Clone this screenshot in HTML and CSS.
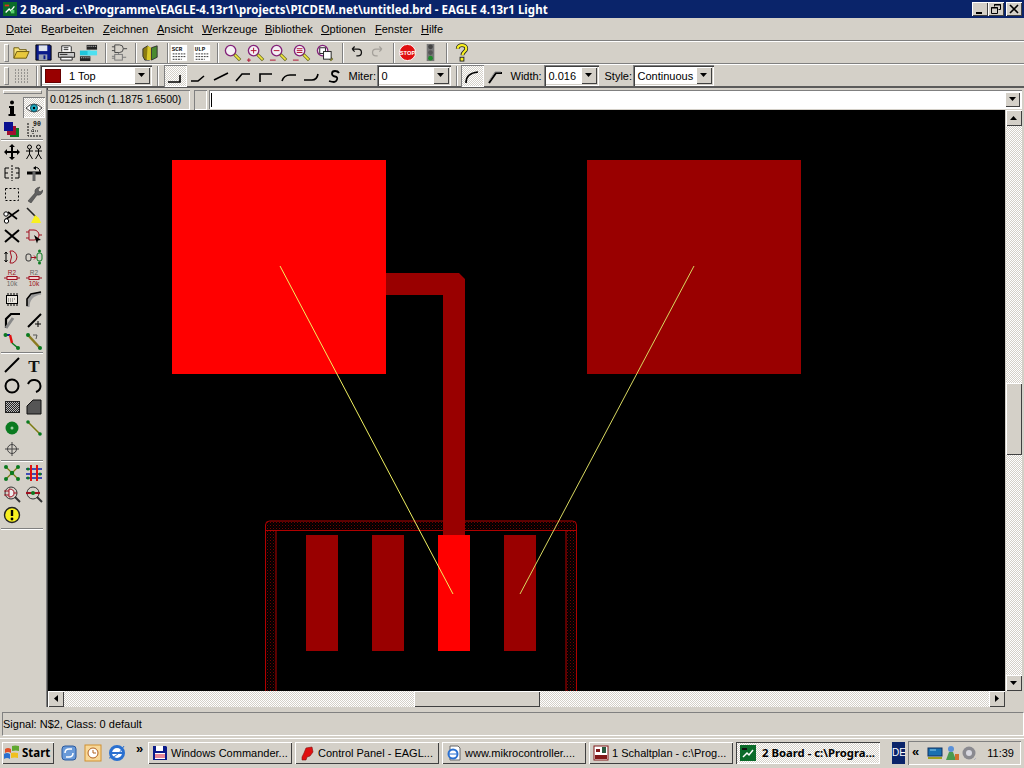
FILE: index.html
```html
<!DOCTYPE html>
<html lang="de">
<head>
<meta charset="utf-8">
<title>2 Board - EAGLE 4.13r1 Light</title>
<link rel="stylesheet" href="styles.css">
</head>
<body>
<svg class="sprite" aria-hidden="true">
  <symbol id="lens" viewBox="0 0 20 20"><circle cx="8" cy="8" r="5.5" fill="#f4f0f4" stroke="#84227a" stroke-width="1.4"/><path d="M12 12l6 6" stroke="#6a6a20" stroke-width="3.4"/><path d="M12.5 12.5l5 5" stroke="#f2e840" stroke-width="1.6"/></symbol>
  <symbol id="arrow" viewBox="0 0 8 5"><path d="M0 0h7L3.500 4z" fill="#000"/></symbol>
</svg>
<div class="window">
  <header class="titlebar">
    <svg class="appicon" viewBox="0 0 16 16"><rect width="16" height="16" fill="#0b6b2a"/><path d="M3 12l4-4 2 2 4-5" stroke="#fff" stroke-width="1.5" fill="none"/><path d="M2 4h5" stroke="#e03020" stroke-width="2"/><rect x="9" y="9" width="4" height="4" fill="#59d070"/></svg>
    <span class="title">2 Board - c:\Programme\EAGLE-4.13r1\projects\PICDEM.net\untitled.brd - EAGLE 4.13r1 Light</span>
    <div class="winbtns">
      <span class="winbtn"><svg viewBox="0 0 12 12" width="12" height="12"><rect x="2" y="9" width="6" height="2" fill="#000"/></svg></span>
      <span class="winbtn"><svg viewBox="0 0 12 12" width="12" height="12"><path d="M4.500 3.500V1.500h6v5h-2M1.500 4.500h6v6h-6z" fill="none" stroke="#000"/><path d="M4 2h7M1 5h7" stroke="#000"/></svg></span>
      <span class="winbtn winbtn-last"><svg viewBox="0 0 12 12" width="12" height="12"><path d="M2 2l8 8M10 2l-8 8" stroke="#000" stroke-width="1.600"/></svg></span>
    </div>
  </header>

  <nav class="menubar">
    <span class="m m1"><u>D</u>atei</span><span class="m m2">B<u>e</u>arbeiten</span><span class="m m3"><u>Z</u>eichnen</span><span class="m m4"><u>A</u>nsicht</span><span class="m m5"><u>W</u>erkzeuge</span><span class="m m6"><u>B</u>ibliothek</span><span class="m m7"><u>O</u>ptionen</span><span class="m m8"><u>F</u>enster</span><span class="m m9"><u>H</u>ilfe</span>
  </nav>

  <div class="toolbar tb1">
    <i class="grip"></i>
    <span class="b"><svg viewBox="0 0 20 20"><path d="M2 16V5h5l1 2h7v2" fill="#f6e27a" stroke="#6b5a10"/><path d="M2 16l3-7h13l-3 7z" fill="#e8c83c" stroke="#6b5a10"/></svg></span>
    <span class="b"><svg viewBox="0 0 20 20"><path d="M2 2h15l1 1v15H2z" fill="#0a1a8a" stroke="#000"/><rect x="5" y="2.500" width="9" height="6" fill="#dfe4ee"/><rect x="5" y="12" width="9" height="6" fill="#9aa0b0"/><rect x="10" y="13" width="2" height="4" fill="#0a1a8a"/></svg></span>
    <span class="b"><svg viewBox="0 0 20 20"><path d="M5 9V3h9l1 1v5" fill="#fff" stroke="#222"/><path d="M1.500 10h17v5h-17z" fill="#c8c8c8" stroke="#222"/><path d="M4 15h12v3H4z" fill="#fff" stroke="#222"/><path d="M7 5h5M7 7h5M3 12h8" stroke="#222"/></svg></span>
    <span class="b"><svg viewBox="0 0 20 20"><rect x="1" y="8" width="11" height="5" fill="#1fc6dc"/><rect x="8" y="2" width="11" height="5" fill="#222"/><rect x="1" y="14" width="11" height="5" fill="#222"/><rect x="9" y="8" width="10" height="5" fill="#4ce0f0"/><path d="M9 3.500h9M2 15.500h9" stroke="#ddd" stroke-dasharray="1 1"/></svg></span>
    <i class="sep s1"></i>
    <span class="b"><svg viewBox="0 0 20 20"><path d="M5 2h5a4 4 0 0 1 0 8H5zM2 4h3M2 8h3M14 6h4" fill="none" stroke="#444"/><rect x="5" y="12" width="8" height="6" fill="none" stroke="#777"/><path d="M9 10v2M2 14h3M2 16h3M13 15h4" stroke="#777"/></svg></span>
    <i class="sep s2"></i>
    <span class="b"><svg viewBox="0 0 20 20"><path d="M2 6l5-3 2 2v13l-5 0-2-4z" fill="#8a7a10" stroke="#333"/><path d="M7 3l4 2v13H6z" fill="#d8c828"/><path d="M11 5l6-2v12l-6 3z" fill="#4a8a30" stroke="#333"/></svg></span>
    <i class="sep s3"></i>
    <span class="b b-doc"><svg viewBox="0 0 20 20"><rect x="1" y="1" width="18" height="18" fill="#fff"/><text x="2" y="8" class="mini">SCR</text><path d="M3 11h14M3 14h14M3 17h10" stroke="#222" stroke-dasharray="2 1"/></svg></span>
    <span class="b b-doc"><svg viewBox="0 0 20 20"><rect x="1" y="1" width="18" height="18" fill="#fff"/><text x="2" y="8" class="mini">ULP</text><path d="M3 11h14M3 14h14M3 17h10" stroke="#222" stroke-dasharray="2 1"/></svg></span>
    <i class="sep s4"></i>
    <span class="b bz"><svg viewBox="0 0 20 20"><use href="#lens"/></svg></span>
    <span class="b bz"><svg viewBox="0 0 20 20"><use href="#lens"/><path d="M5 8h6M8 5v6" stroke="#b01030"/><path d="M1 18h4M3 16v4" stroke="#b01030"/></svg></span>
    <span class="b bz"><svg viewBox="0 0 20 20"><use href="#lens"/><path d="M5 8h6M1 18h6" stroke="#b01030"/></svg></span>
    <span class="b bz"><svg viewBox="0 0 20 20"><use href="#lens"/><path d="M5 6h6M5 8h6M5 10h6M1 18h6" stroke="#b01030"/></svg></span>
    <span class="b bz"><svg viewBox="0 0 20 20"><use href="#lens"/><rect x="5" y="5" width="6" height="6" fill="#fff" stroke="#222"/><rect x="9" y="9" width="8" height="8" fill="#fff" stroke="#222"/></svg></span>
    <i class="sep s5"></i>
    <span class="b bz bs"><svg viewBox="0 0 20 20"><path d="M6 6h7a4 4 0 0 1 0 8h-2M6 6l3-3M6 6l3 3" fill="none" stroke="#111" stroke-width="1.500"/></svg></span>
    <span class="b bz bs"><svg viewBox="0 0 20 20"><path d="M14 6H7a4 4 0 0 0 0 8h2M14 6l-3-3M14 6l-3 3" fill="none" stroke="#a4a09a" stroke-width="1.500"/></svg></span>
    <i class="sep s6"></i>
    <span class="b bz"><svg viewBox="0 0 20 20"><circle cx="10" cy="10" r="8.500" fill="#e01010" stroke="#fff"/><text x="10" y="12.500" class="stop">STOP</text></svg></span>
    <span class="b bz"><svg viewBox="0 0 20 20"><rect x="6" y="1" width="8" height="18" fill="#777"/><circle cx="10" cy="4" r="2.500" fill="#444"/><circle cx="10" cy="10" r="2.500" fill="#555"/><circle cx="10" cy="16" r="2.500" fill="#1d8a2a"/></svg></span>
    <i class="sep s7"></i>
    <span class="b bz"><svg viewBox="0 0 20 20"><path d="M6 6c0-5 9-5 9 0 0 3-4 3-4 7" fill="none" stroke="#222" stroke-width="4"/><path d="M6 6c0-5 9-5 9 0 0 3-4 3-4 7" fill="none" stroke="#f8f020" stroke-width="2.400"/><rect x="8.500" y="15" width="4" height="4" fill="#f8f020" stroke="#222"/></svg></span>
  </div>

  <div class="toolbar tb2">
    <i class="grip"></i>
    <span class="b b-dots"></span>
    <i class="sep s8"></i>
    <div class="combo c-layer"><i class="swatch"></i><span class="ctext">1 Top</span><span class="carrow"><svg width="8" height="5"><use href="#arrow"/></svg></span></div>
    <i class="sep s9"></i>
    <span class="b w b-on"><svg viewBox="0 0 20 20"><path d="M3 16h12V9" fill="none" stroke="#000" stroke-width="1.600"/></svg></span>
    <span class="b w"><svg viewBox="0 0 20 20"><path d="M3 15h7l6-5" fill="none" stroke="#000" stroke-width="1.600"/></svg></span>
    <span class="b w"><svg viewBox="0 0 20 20"><path d="M3 14l14-7" fill="none" stroke="#000" stroke-width="1.600"/></svg></span>
    <span class="b w"><svg viewBox="0 0 20 20"><path d="M3 15l6-7h8" fill="none" stroke="#000" stroke-width="1.600"/></svg></span>
    <span class="b w"><svg viewBox="0 0 20 20"><path d="M4 16V8h12" fill="none" stroke="#000" stroke-width="1.600"/></svg></span>
    <span class="b w"><svg viewBox="0 0 20 20"><path d="M3 15q2-6 8-6h6" fill="none" stroke="#000" stroke-width="1.600"/></svg></span>
    <span class="b w"><svg viewBox="0 0 20 20"><path d="M3 14h8q5 0 6-6" fill="none" stroke="#000" stroke-width="1.600"/></svg></span>
    <span class="b w"><svg viewBox="0 0 20 20"><path d="M15 7q-1-2-4-2t-3 2.500 3 3 2 3-3 2.500-5-1" fill="none" stroke="#000" stroke-width="1.800"/></svg></span>
    <span class="lbl l-miter">Miter:</span>
    <div class="combo c-miter"><span class="ctext">0</span><span class="carrow"><svg width="8" height="5"><use href="#arrow"/></svg></span></div>
    <i class="sep s10"></i>
    <span class="b wr b-on"><svg viewBox="0 0 20 20"><path d="M4 17q0-10 12-11" fill="none" stroke="#000" stroke-width="1.600"/></svg></span>
    <span class="b wr"><svg viewBox="0 0 20 20"><path d="M4 17l7-10h6" fill="none" stroke="#000" stroke-width="2"/><path d="M4 15l6-9h6" fill="none" stroke="#888"/></svg></span>
    <span class="lbl l-width">Width:</span>
    <div class="combo c-width"><span class="ctext">0.016</span><span class="carrow"><svg width="8" height="5"><use href="#arrow"/></svg></span></div>
    <span class="lbl l-style">Style:</span>
    <div class="combo c-style"><span class="ctext">Continuous</span><span class="carrow"><svg width="8" height="5"><use href="#arrow"/></svg></span></div>
  </div>

  <main class="workspace">
    <aside class="dock">
      <i class="dock-grip"></i>
      <div class="tools">
        <span class="t"><svg viewBox="0 0 18 18"><circle cx="9" cy="3.500" r="2" fill="#000"/><path d="M6 7h5v8h1.500v2h-7v-2H7V9H6z" fill="#000"/></svg></span>
        <span class="t t-on"><svg viewBox="0 0 18 18"><path d="M1 9q8-8 16 0-8 8-16 0z" fill="#fff" stroke="#444"/><circle cx="9" cy="9" r="3.500" fill="#20b0c8" stroke="#0a5060"/><circle cx="9" cy="9" r="1.200" fill="#000"/></svg></span>
        <span class="t"><svg viewBox="0 0 18 18"><rect x="7" y="8" width="9" height="9" fill="#0a7a20"/><rect x="4" y="6" width="9" height="9" fill="#a01030"/><rect x="1" y="2" width="9" height="9" fill="#0a1090"/></svg></span>
        <span class="t"><svg viewBox="0 0 18 18"><path d="M3 3v13h14" fill="none" stroke="#000" stroke-dasharray="2 1"/><path d="M6 11h8M8 7v7" stroke="#000" stroke-dasharray="1 1"/><text x="8" y="6" class="mini">90</text></svg></span>
      </div>
      <i class="dock-sep"></i>
      <div class="tools">
        <span class="t"><svg viewBox="0 0 18 18"><path d="M9 1l3 3h-2v4h4V6l3 3-3 3v-2h-4v4h2l-3 3-3-3h2v-4H4v2L1 9l3-3v2h4V4H6z" fill="#000"/></svg></span>
        <span class="t"><svg viewBox="0 0 18 18"><g fill="none" stroke="#000"><circle cx="4.500" cy="4" r="2"/><circle cx="13.500" cy="4" r="2"/><path d="M4.500 6v5M1 8h7M1.500 16l3-5 3 5M13.500 6v5M10 8h7M10.500 16l3-5 3 5"/></g></svg></span>
        <span class="t"><svg viewBox="0 0 18 18"><path d="M9 1v16" stroke="#000" stroke-dasharray="2 1"/><path d="M6 4H2v10h4M2 9h3M12 4h4v10h-4M16 9h-3" fill="none" stroke="#000"/></svg></span>
        <span class="t"><svg viewBox="0 0 18 18"><path d="M2 9h14" stroke="#000" stroke-width="3"/><path d="M9 17V7" stroke="#666" stroke-width="3"/><path d="M9 4q5-2 6 4" fill="none" stroke="#000"/><path d="M8 4l3-2v4z" fill="#000"/></svg></span>
        <span class="t"><svg viewBox="0 0 18 18"><rect x="2.500" y="3.500" width="13" height="12" fill="none" stroke="#000" stroke-dasharray="2 2"/></svg></span>
        <span class="t"><svg viewBox="0 0 18 18"><path d="M3 16l7-8q-1-5 5-6l-2 3 2 2 3-2q-1 6-6 5l-6 8z" fill="#606060" stroke="#333" stroke-width=".5"/></svg></span>
        <span class="t"><svg viewBox="0 0 18 18"><path d="M2 14L16 4M5 6l9 7" stroke="#000" stroke-width="1.600"/><circle cx="3.500" cy="15" r="2.200" fill="#fff" stroke="#000"/><circle cx="3" cy="8" r="2.200" fill="#fff" stroke="#000"/></svg></span>
        <span class="t"><svg viewBox="0 0 18 18"><path d="M2 2l9 9" stroke="#222" stroke-width="1.600"/><path d="M10 9l4 3 2 5H6z" fill="#f8f020"/></svg></span>
        <span class="t"><svg viewBox="0 0 18 18"><path d="M2 3l14 12M16 3L2 15" stroke="#000" stroke-width="2"/></svg></span>
        <span class="t"><svg viewBox="0 0 18 18"><path d="M4 3h5a5 5 0 0 1 0 10H4zM1 5h3M1 11h3M14 8h3" fill="none" stroke="#a01020"/><path d="M9 8l7 5-3 .5-1 3z" fill="#000"/></svg></span>
        <span class="t"><svg viewBox="0 0 18 18"><path d="M7 3h3q4 2 4 6t-4 6H7M7 3q3 6 0 12" fill="none" stroke="#a01020"/><path d="M3 4v10M3 4L1.500 6M3 4l1.500 2M3 14l-1.500-2M3 14l1.500-2" stroke="#000" fill="none"/></svg></span>
        <span class="t"><svg viewBox="0 0 18 18"><rect x="1" y="6" width="5" height="7" rx="2" fill="none" stroke="#333"/><path d="M6 9.500h5M9 7.500l2 2-2 2" fill="none" stroke="#a01020"/><rect x="12" y="5" width="5" height="8" rx="2" fill="none" stroke="#0a7a20"/><circle cx="14.500" cy="3" r="1.500" fill="#0a7a20"/><circle cx="14.500" cy="15" r="1.500" fill="#0a7a20"/></svg></span>
        <span class="t"><svg viewBox="0 0 18 18"><text x="9" y="6" class="mic">R2</text><rect x="4" y="7.500" width="10" height="3" fill="#f0d0d0" stroke="#a01020"/><path d="M1 9h3M14 9h3" stroke="#a01020"/><text x="9" y="17" class="mic mic-g">10k</text></svg></span>
        <span class="t"><svg viewBox="0 0 18 18"><text x="9" y="6" class="mic mic-g">R2</text><rect x="4" y="7.500" width="10" height="3" fill="#f0d0d0" stroke="#a01020"/><path d="M1 9h3M14 9h3" stroke="#a01020"/><text x="9" y="17" class="mic">10k</text></svg></span>
        <span class="t"><svg viewBox="0 0 18 18"><rect x="3.500" y="5.500" width="11" height="8" fill="#ece8e0" stroke="#000"/><path d="M5 3v2M8 3v2M11 3v2M14 3v2M5 14v2M8 14v2M11 14v2M14 14v2" stroke="#000"/><path d="M5 9h8M5 11h6" stroke="#555" stroke-dasharray="1 1"/></svg></span>
        <span class="t"><svg viewBox="0 0 18 18"><path d="M3 17q0-12 13-14" fill="none" stroke="#999" stroke-width="3"/><path d="M2 16V9l4-5 10-2" fill="none" stroke="#000" stroke-width="1.600"/></svg></span>
        <span class="t"><svg viewBox="0 0 18 18"><path d="M3 17V8l5-5h9" fill="none" stroke="#000" stroke-width="2.200"/><path d="M3 17l7-10" stroke="#888" stroke-width="3"/></svg></span>
        <span class="t"><svg viewBox="0 0 18 18"><path d="M3 16L16 3" stroke="#000" stroke-width="2"/><path d="M13 10v6M10 13h6" stroke="#000"/></svg></span>
        <span class="t"><svg viewBox="0 0 18 18"><path d="M2 3h5" stroke="#1020a0" stroke-width="2"/><path d="M7 3l2 8" stroke="#e01010" stroke-width="2.400"/><path d="M9 11l6 5" stroke="#0a7a20" stroke-width="1.500"/><circle cx="2.500" cy="3" r="2" fill="#0a7a20"/><circle cx="15" cy="16" r="2" fill="#0a7a20"/></svg></span>
        <span class="t"><svg viewBox="0 0 18 18"><path d="M3 3l12 13" stroke="#0a7a20" stroke-width="1"/><path d="M3 3l12 13" stroke="#8a7a20" stroke-width="2.500"/><path d="M8 3h4l-1 4" fill="none" stroke="#555"/><circle cx="3" cy="3" r="2" fill="#0a7a20"/><circle cx="15" cy="16" r="2" fill="#0a7a20"/></svg></span>
      </div>
      <i class="dock-sep dock-sep-w"></i>
      <div class="tools">
        <span class="t"><svg viewBox="0 0 18 18"><path d="M2 16L16 2" stroke="#000" stroke-width="2"/></svg></span>
        <span class="t"><svg viewBox="0 0 18 18"><text x="9" y="15.500" class="bigt">T</text></svg></span>
        <span class="t"><svg viewBox="0 0 18 18"><circle cx="9" cy="9" r="6.500" fill="none" stroke="#000" stroke-width="2"/></svg></span>
        <span class="t"><svg viewBox="0 0 18 18"><path d="M3 7a6.500 6.500 0 0 1 12.500 2c0 3-2 5-4.500 6" fill="none" stroke="#000" stroke-width="2"/></svg></span>
        <span class="t"><i class="hatch hatch-r"></i></span>
        <span class="t"><svg viewBox="0 0 18 18"><path d="M2 8l6-6h8v14H2z" fill="#555" stroke="#111"/></svg></span>
        <span class="t"><svg viewBox="0 0 18 18"><circle cx="9" cy="9" r="6.500" fill="#0a7a20"/><circle cx="9" cy="9" r="1.500" fill="#9ad0a0"/></svg></span>
        <span class="t"><svg viewBox="0 0 18 18"><path d="M3 3l12 12" stroke="#7a7a10" stroke-width="1.500"/><circle cx="3" cy="3" r="1.800" fill="#0a7a20"/><circle cx="15" cy="15" r="1.800" fill="#0a7a20"/></svg></span>
        <span class="t"><svg viewBox="0 0 18 18"><circle cx="9" cy="9" r="4.500" fill="none" stroke="#444"/><path d="M9 2v14M2 9h14" stroke="#444"/></svg></span>
      </div>
      <i class="dock-sep dock-sep-w"></i>
      <div class="tools">
        <span class="t"><svg viewBox="0 0 18 18"><path d="M3 3l12 12M15 3L3 15" stroke="#7a7a10" stroke-width="1.200"/><g fill="#0a7a20"><circle cx="3" cy="3" r="2"/><circle cx="15" cy="3" r="2"/><circle cx="9" cy="9" r="2.200"/><circle cx="3" cy="15" r="2"/><circle cx="15" cy="15" r="2"/></g></svg></span>
        <span class="t"><svg viewBox="0 0 18 18"><path d="M1 5h16M1 10h16M1 14h16" stroke="#1020b0" stroke-width="1.500"/><path d="M6 1v16M12 1v16" stroke="#e01010" stroke-width="2"/><g fill="#0a7a20"><circle cx="3" cy="5" r="1.500"/><circle cx="15" cy="10" r="1.500"/><circle cx="3" cy="14" r="1.500"/></g></svg></span>
        <span class="t"><svg viewBox="0 0 18 18"><circle cx="8" cy="8" r="6" fill="none" stroke="#333"/><path d="M6 4v8q5 0 5-4T6 4zM1 6h5M1 10h5M11 8h3" fill="#eee" stroke="#a01020"/><path d="M12 12l5 5" stroke="#333" stroke-width="2"/></svg></span>
        <span class="t"><svg viewBox="0 0 18 18"><circle cx="8" cy="8" r="6" fill="none" stroke="#333"/><path d="M1 8h14" stroke="#a01020" stroke-width="2"/><circle cx="8" cy="8" r="2" fill="#0a7a20"/><path d="M12 12l5 5" stroke="#333" stroke-width="2"/></svg></span>
        <span class="t"><svg viewBox="0 0 18 18"><circle cx="9" cy="9" r="7.500" fill="#f8f020" stroke="#222" stroke-width="1.400"/><path d="M9 4v6" stroke="#000" stroke-width="2.400"/><circle cx="9" cy="13" r="1.400" fill="#000"/></svg></span>
      </div>
      <i class="dock-sep dock-end"></i>
    </aside>

    <section class="editor">
      <div class="cmdrow">
        <span class="coords">0.0125 inch (1.1875 1.6500)</span>
        <span class="cbox"></span>
        <div class="cmdinput"><i class="caret"></i><span class="carrow cmd-arrow"><svg width="8" height="5"><use href="#arrow"/></svg></span></div>
      </div>
      <div class="editor-mid">
        <svg class="canvas" viewBox="48 110 957 582" width="957" height="582">
          <defs>
            <pattern id="dots" width="3" height="3" patternUnits="userSpaceOnUse"><rect width="1" height="1" fill="#700000"/><rect x="1.500" y="1.500" width="1" height="1" fill="#480000"/></pattern>
          </defs>
          <rect x="48" y="110" width="957" height="582" fill="#000"/>
          <path d="M266 521h310v10H276v161h-10zM566 531h10v161h-10z" fill="url(#dots)"/>
          <path d="M265.500 692V525q0-4 4-4h303q4 0 4 4v167" fill="none" stroke="#b00000"/>
          <path d="M266 530.500h310M276 531v161M566 531v161" stroke="#b00000" fill="none"/>
          <path d="M386 273h73l6 6v256h-22V295h-57z" fill="#990000"/>
          <rect x="587" y="160" width="214" height="214" fill="#990000"/>
          <rect x="172" y="160" width="214" height="214" fill="#ff0000"/>
          <rect x="306" y="535" width="32" height="116" fill="#990000"/>
          <rect x="372" y="535" width="32" height="116" fill="#990000"/>
          <rect x="438" y="535" width="32" height="116" fill="#ff0000"/>
          <rect x="504" y="535" width="32" height="116" fill="#990000"/>
          <path d="M280 266l173 328" stroke="#f0f060" fill="none"/>
          <path d="M694 266L520 594" stroke="#d8d860" fill="none"/>
        </svg>
        <div class="vscroll">
          <span class="sb sb-up"><svg width="8" height="5" viewBox="0 0 8 5"><path d="M0 4h7L3.500 0z"/></svg></span>
          <div class="vtrack"><span class="vthumb"></span></div>
          <span class="sb"><svg width="8" height="5"><use href="#arrow"/></svg></span>
        </div>
      </div>
      <div class="hscroll">
        <span class="sb"><svg width="5" height="8" viewBox="0 0 5 8"><path d="M4 0v7L0 3.500z"/></svg></span>
        <div class="htrack"><span class="hthumb"></span></div>
        <span class="sb"><svg width="5" height="8" viewBox="0 0 5 8"><path d="M0 0v7l4-3.500z"/></svg></span>
        <span class="corner"></span>
      </div>
    </section>
  </main>

  <div class="statusbar">Signal: N$2, Class: 0 default</div>

  <footer class="taskbar">
    <span class="start"><svg viewBox="0 0 16 16" width="16" height="16"><path d="M1 4q3-2 6 0v4q-3-2-6 0z" fill="#e0502a"/><path d="M8 1q3-1 7 0v5q-3-1-7 0z" fill="#60a830"/><path d="M0 9q3-2 6 0v5q-3-2-6 0z" fill="#2a70d0"/><path d="M7 8q3-1 7 0v5q-3-1-7 0z" fill="#f0c020"/></svg><b>Start</b></span>
    <i class="task-sep"></i>
    <div class="quick">
      <svg viewBox="0 0 18 18" width="18" height="18"><rect x="2" y="2" width="14" height="14" rx="3" fill="#6a9ad8" stroke="#2a5aa0"/><path d="M5 9q0-4 4-4h3M13 9q0 4-4 4H6" fill="none" stroke="#fff" stroke-width="1.500"/></svg>
      <svg viewBox="0 0 18 18" width="18" height="18"><rect x="1" y="1" width="16" height="16" fill="#f8d898" stroke="#d09030"/><circle cx="9" cy="9" r="5" fill="#fff" stroke="#b06020"/><path d="M9 6v3h3" fill="none" stroke="#b06020"/></svg>
      <svg viewBox="0 0 18 18" width="18" height="18"><circle cx="9" cy="9" r="6.500" fill="#fff" stroke="#2a70d0" stroke-width="3"/><path d="M4 9h10" stroke="#2a70d0" stroke-width="2"/><path d="M1 14q8 0 15-12" fill="none" stroke="#2a70d0"/></svg>
    </div>
    <span class="chev">»</span>
    <div class="tasks">
      <span class="task"><svg viewBox="0 0 16 16" width="16" height="16"><path d="M1 1h13l1 1v13H1z" fill="#0a1a8a"/><rect x="4" y="1" width="7" height="5" fill="#fff"/><rect x="3" y="8" width="10" height="6" fill="#fff"/><path d="M3 10h10M3 12h10" stroke="#d01030"/></svg><span class="tasktext">Windows Commander...</span></span>
      <span class="task"><svg viewBox="0 0 16 16" width="16" height="16"><path d="M3 12l2-4 2-5 6-1 1 5-3 4-3 1-1 3-4 0z" fill="#e01010" stroke="#801010" stroke-width=".6"/></svg><span class="tasktext">Control Panel - EAGL...</span></span>
      <span class="task"><svg viewBox="0 0 16 16" width="16" height="16"><path d="M4 1h8l2 2v12H4z" fill="#fff" stroke="#666"/><circle cx="7" cy="9" r="4.500" fill="#fff" stroke="#2a70d0" stroke-width="2"/><path d="M3 9h8" stroke="#2a70d0"/></svg><span class="tasktext">www.mikrocontroller....</span></span>
      <span class="task"><svg viewBox="0 0 16 16" width="16" height="16"><rect x="1" y="1" width="14" height="14" fill="#fff" stroke="#801818"/><rect x="2" y="10" width="12" height="4" fill="#801818"/><rect x="3" y="4" width="4" height="3" fill="#801818"/><rect x="9" y="2" width="4" height="6" fill="#2a5a40"/></svg><span class="tasktext">1 Schaltplan - c:\Prog...</span></span>
      <span class="task task-on"><svg viewBox="0 0 16 16" width="16" height="16"><rect width="16" height="16" fill="#0b6b2a"/><path d="M3 12l4-4 2 2 4-5" stroke="#fff" stroke-width="1.500" fill="none"/><path d="M2 4h5" stroke="#101010" stroke-width="2"/></svg><b class="tasktext">2 Board - c:\Progra...</b></span>
    </div>
    <span class="lang">DE</span>
    <div class="tray">
      <span class="tray-chev">«</span>
      <svg viewBox="0 0 16 16" width="16" height="16"><rect x="1" y="3" width="14" height="8" fill="#1a70b0" stroke="#103060"/><path d="M1 13h14" stroke="#a0a020" stroke-width="2"/><path d="M3 5h6" stroke="#8fd0f0"/></svg>
      <svg viewBox="0 0 16 16" width="16" height="16"><circle cx="7" cy="4" r="3" fill="#5a90d8"/><path d="M2 15l3-8h4l3 8z" fill="#4a9a50"/><path d="M11 9h4v6h-4z" fill="#d07030"/></svg>
      <svg viewBox="0 0 16 16" width="16" height="16"><circle cx="8" cy="8" r="6.500" fill="#8a8a90"/><circle cx="8" cy="8" r="3" fill="#d8d8e0"/><path d="M13 15l2-2" stroke="#b0b0c0"/></svg>
      <span class="clock">11:39</span>
    </div>
  </footer>
</div>
</body>
</html>
```
FILE: styles.css
```css
* { box-sizing: border-box; }
html, body { margin: 0; padding: 0; }
body { width: 1024px; height: 768px; overflow: hidden; background: #d4d0c8; font: 11px "Liberation Sans", "Noto Sans", sans-serif; color: #000; }
i { display: block; font-style: normal; }
svg { display: block; }
.sprite { width: 0; height: 0; position: absolute; }
.window { width: 1024px; height: 768px; display: flex; flex-direction: column; }

/* title */
.titlebar { height: 18px; background: #0a246a; display: flex; align-items: center; padding: 0 2px 0 3px; color: #fff; }
.appicon { width: 14px; height: 14px; margin-right: 3px; }
.title { font: bold 11.500px "Noto Sans", sans-serif; white-space: nowrap; letter-spacing: .03px; }
.winbtns { margin-left: auto; display: flex; gap: 0; }
.winbtn { width: 16px; height: 14px; background: #d4d0c8; display: flex; align-items: center; justify-content: center; box-shadow: inset 1px 1px #fff, inset -1px -1px #404040; }
.winbtn-last { margin-left: 2px; }

/* menu */
.menubar { height: 23px; display: flex; align-items: center; padding: 0 0 0 6px; border-bottom: 1px solid #808080; }
.m { white-space: nowrap; }
.m1 { width: 35px; } .m2 { width: 62px; } .m3 { width: 54px; } .m4 { width: 45px; } .m5 { width: 63px; } .m6 { width: 56px; } .m7 { width: 54px; } .m8 { width: 46px; }

/* toolbars */
.toolbar { display: flex; align-items: center; border-top: 1px solid #fff; padding-left: 4px; position: relative; }
.tb1 { height: 23px; border-bottom: 1px solid #808080; }
.tb2 { height: 24px; border-bottom: 2px solid #5a5a5a; }
.grip { width: 5px; height: 18px; border: 1px solid; border-color: #fff #808080 #808080 #fff; margin-right: 1px; flex: none; }
.b { width: 22.500px; height: 22px; display: flex; align-items: center; justify-content: center; flex: none; }
.bz { width: 23px; }
.b svg { width: 20px; height: 20px; }
.tb1 .b svg { width: 19px; height: 19px; }
.tb1 .b-doc svg { width: 18px; height: 18px; }
.tb1 .bs svg { width: 17px; height: 17px; }
.sep { width: 2px; height: 20px; flex: none; border-left: 1px solid #808080; border-right: 1px solid #fff; }
.s1 { margin: 0 1px 0 5px; } .s2 { margin: 0 1.750px 0 4.750px; } .s3 { margin: 0 -1.250px 0 5.750px; }
.s4 { margin: 0 1.250px 0 4.250px; } .s5 { margin: 0 -.5px 0 6.500px; } .s6 { margin: 0 .5px 0 3.500px; } .s7 { margin: 0 1.500px 0 4.500px; }
.mini { font: bold 6.500px "Liberation Mono", monospace; fill: #111; }
.stop { font: bold 6px "Liberation Sans", sans-serif; fill: #fff; text-anchor: middle; }
.mic { font: 6.500px "Liberation Sans", sans-serif; fill: #9a1020; text-anchor: middle; }
.mic-g { fill: #666; }
.bigt { font: bold 17px "Liberation Serif", serif; fill: #111; text-anchor: middle; }

.b-dots { width: 23px; background-image: radial-gradient(#555 .7px, transparent .8px); background-size: 3px 3px; background-position: center; background-clip: content-box; padding: 4px 3px; }
.s8 { margin: 0 2px 0 3px; }
.s9 { margin: 0 5px 0 5px; }
.s10 { margin: 0 3px 0 5px; }
.combo { height: 21px; background: #fff; display: flex; align-items: center; flex: none; box-shadow: inset 1px 1px #808080, inset 2px 2px #404040, inset -1px -1px #fff, inset -2px -2px #d4d0c8; padding: 2px; }
.ctext { flex: 1; padding-left: 3px; white-space: nowrap; overflow: hidden; }
.carrow { width: 16px; height: 17px; background: #d4d0c8; display: flex; align-items: center; justify-content: center; box-shadow: inset 1px 1px #fff, inset -1px -1px #404040; flex: none; }
.c-layer { width: 112px; }
.swatch { width: 16px; height: 14px; background: #990000; margin-left: 3px; border: 1px solid #600; flex: none; }
.c-layer .ctext { padding-left: 8px; }
.c-miter { width: 74px; }
.c-width { width: 55px; }
.c-style { width: 81px; }
.w { width: 22.700px; }
.wr { width: 23px; }
.lbl { white-space: nowrap; flex: none; }
.b-on { background: repeating-conic-gradient(#d4d0c8 0 25%, #fff 0 50%) 0 0 / 2px 2px; box-shadow: inset 1px 1px #808080, inset -1px -1px #fff; }
.l-miter { margin-left: 3px; width: 28px; }
.l-width { margin-left: 4px; width: 33px; }
.l-style { margin-left: 6px; width: 28px; }

/* workspace */
.workspace { flex: 1; display: flex; min-height: 0; }
.dock { width: 48px; flex: none; padding: 2px 4px 0 1px; border-right: 1px solid #404040; box-shadow: inset -1px 0 #808080; }
.dock-grip { height: 4px; border: 1px solid; border-color: #fff #808080 #808080 #fff; margin: 0 1px 3px 2px; }
.tools { display: grid; grid-template-columns: 22px 22px; grid-auto-rows: 21px; }
.dock-sep { height: 2px; border-top: 1px solid #808080; border-bottom: 1px solid #fff; }
.dock-sep-w { margin-top: 1px; }
.dock-end { margin-top: 3px; }
.t { display: flex; align-items: center; justify-content: center; }
.t svg { width: 18px; height: 18px; }
.t-on { background: repeating-conic-gradient(#d4d0c8 0 25%, #fff 0 50%) 0 0 / 2px 2px; box-shadow: inset 1px 1px #808080, inset -1px -1px #fff; }
.hatch { width: 15px; height: 12px; border: 1px solid #222; background: repeating-conic-gradient(#222 0 25%, #bbb 0 50%) 0 0 / 2px 2px; }

.editor { flex: 1; min-width: 0; display: flex; flex-direction: column; }
.cmdrow { height: 22px; display: flex; align-items: center; padding-top: 1px; }
.coords { width: 143px; height: 20px; line-height: 19px; padding-left: 3px; font-size: 10.500px; white-space: nowrap; box-shadow: inset 1px 1px #808080, inset -1px -1px #fff; flex: none; margin-left: -1px; }
.cbox { width: 13px; height: 20px; margin: 0 2px 0 4px; box-shadow: inset 1px 1px #808080, inset -1px -1px #fff; flex: none; }
.cmdinput { flex: 1; height: 19px; background: #fff; display: flex; align-items: center; justify-content: space-between; padding: 0 2px; margin-right: 2px; box-shadow: inset 1px 1px #808080; }
.caret { width: 1px; height: 14px; background: #000; }
.cmd-arrow { width: 15px; height: 15px; }
.editor-mid { flex: 1; min-height: 0; display: flex; }
.canvas { flex: none; width: 957px; height: 582px; }
.vscroll { width: 17px; margin-right: 2px; display: flex; flex-direction: column; background: #d4d0c8; padding-left: 1px; flex: none; }
.sb { width: 16px; height: 16px; flex: none; display: flex; align-items: center; justify-content: center; background: #d4d0c8; box-shadow: inset 1px 1px #fff, inset -1px -1px #404040; }
.vtrack { flex: 1; background: repeating-conic-gradient(#d4d0c8 0 25%, #fff 0 50%) 0 0 / 2px 2px; padding-top: 257px; }
.vthumb { display: block; height: 72px; background: #d4d0c8; box-shadow: inset 1px 1px #fff, inset -1px -1px #404040; }
.hscroll { height: 16px; display: flex; }
.htrack { flex: 1; background: repeating-conic-gradient(#d4d0c8 0 25%, #fff 0 50%) 0 0 / 2px 2px; padding-left: 350px; }
.hthumb { display: block; width: 126px; height: 16px; background: #d4d0c8; box-shadow: inset 1px 1px #fff, inset -1px -1px #404040; }
.corner { width: 19px; flex: none; }

/* status */
.statusbar { height: 24px; margin: 5px 0 2px 2px; line-height: 22px; border: 1px solid; border-color: #808080 #fff #fff #808080; }

/* taskbar */
.taskbar { height: 30px; flex: none; display: flex; align-items: center; padding: 0 3px 2px 2px; border-top: 1px solid #fff; }
.start { width: 52px; height: 22px; display: flex; align-items: center; gap: 2px; padding-left: 2px; box-shadow: inset 1px 1px #fff, inset -1px -1px #404040; flex: none; }
.start b { font: bold 11.500px "Noto Sans", sans-serif; }
.task-sep { width: 2px; height: 20px; margin: 0 2px; flex: none; }
.quick { display: flex; gap: 6px; flex: none; }
.chev { width: 17px; font-size: 13px; text-align: center; margin: -8px 0 0 5px; font-weight: bold; flex: none; }
.tasks { display: flex; gap: 3px; flex: none; }
.task { width: 144px; height: 22px; display: flex; align-items: center; gap: 3px; padding-left: 4px; box-shadow: inset 1px 1px #fff, inset -1px -1px #404040; white-space: nowrap; overflow: hidden; flex: none; }
.task-on { background: repeating-conic-gradient(#d4d0c8 0 25%, #fff 0 50%) 0 0 / 2px 2px; box-shadow: inset 1px 1px #404040, inset -1px -1px #fff; gap: 6px; }
.task-on b { font: bold 11.300px "Noto Sans", sans-serif; }
.lang { width: 13px; height: 22px; margin-left: 12px; background: #0a246a; color: #fff; font-size: 10px; line-height: 22px; text-align: center; flex: none; }
.tray { width: 113px; height: 24px; margin-left: 3px; display: flex; align-items: center; padding-left: 4px; gap: 1px; box-shadow: inset 1px 1px #808080, inset -1px -1px #fff; flex: none; }
.tray-chev { width: 14px; font-weight: bold; font-size: 13px; margin-top: -3px; }
.clock { margin-left: auto; padding-right: 7px; }
```
